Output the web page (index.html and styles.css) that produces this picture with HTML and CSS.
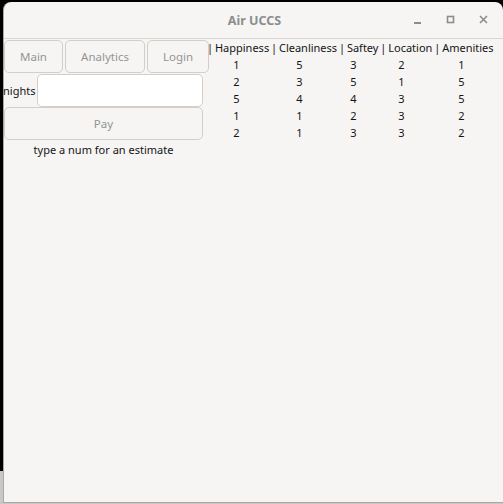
FILE: index.html
```html
<!DOCTYPE html>
<html>
<head>
<meta charset="utf-8">
<link rel="stylesheet" href="styles.css">
<title>Air UCCS</title>
</head>
<body>
<div class="window">
  <header class="titlebar">
    <span class="title">Air UCCS</span>
    <div class="controls">
      <svg class="ctl" width="12" height="12" viewBox="0 0 12 12"><rect x="2" y="8" width="7" height="2" fill="#8c8c8c"/></svg>
      <svg class="ctl" width="12" height="12" viewBox="0 0 12 12"><rect x="2.5" y="2.5" width="6" height="6" fill="none" stroke="#8c8c8c" stroke-width="1.6"/></svg>
      <svg class="ctl" width="12" height="12" viewBox="0 0 12 12"><path d="M2 2 L9 9 M9 2 L2 9" stroke="#8c8c8c" stroke-width="1.6"/></svg>
    </div>
  </header>
  <main class="content">
    <section class="left">
      <nav class="nav">
        <button class="btn b-main">Main</button>
        <button class="btn b-analytics">Analytics</button>
        <button class="btn b-login">Login</button>
      </nav>
      <div class="row">
        <label class="lbl">nights</label>
        <input class="input" type="text">
      </div>
      <button class="btn b-pay">Pay</button>
      <p class="hint">type a num for an estimate</p>
    </section>
    <section class="table">
      <div class="thead">| Happiness | Cleanliness | Saftey | Location | Amenities</div>
      <div class="tbody">
        <span>1</span><span>5</span><span>3</span><span>2</span><span>1</span>
        <span>2</span><span>3</span><span>5</span><span>1</span><span>5</span>
        <span>5</span><span>4</span><span>4</span><span>3</span><span>5</span>
        <span>1</span><span>1</span><span>2</span><span>3</span><span>2</span>
        <span>2</span><span>1</span><span>3</span><span>3</span><span>2</span>
      </div>
    </section>
  </main>
</div>
</body>
</html>
```

FILE: styles.css
```css
html, body {
  margin: 0;
  height: 504px;
  overflow: hidden;
}
body {
  background: linear-gradient(#000 471px, #c9c8c6 471px);
  padding: 2px 0 0 3px;
  box-sizing: border-box;
  font-family: "Noto Sans", "Open Sans", sans-serif;
}
.window {
  width: 500px;
  height: 501px;
  box-sizing: border-box;
  background: #f6f5f4;
  border: 1px solid #aaa7a4;
  border-top: none;
  border-right: none;
  border-radius: 8px 8px 0 0;
  display: flex;
  flex-direction: column;
}
.titlebar {
  height: 36px;
  border-bottom: 1px solid #d9d5d1;
  display: flex;
  align-items: center;
  justify-content: center;
  position: relative;
  border-radius: 8px 8px 0 0;
}
.title {
  font-weight: bold;
  font-size: 12.5px;
  color: #8b8d8e;
  margin-left: 2px;
  margin-top: 1px;
}
.controls {
  position: absolute;
  right: 13px;
  top: 12px;
  display: flex;
  gap: 21px;
}
.ctl { display: block; }
.content {
  display: flex;
  align-items: flex-start;
}
.left {
  width: 203px;
  flex: none;
  display: flex;
  flex-direction: column;
}
.nav {
  display: flex;
  gap: 2px;
  margin-top: 1px;
  width: 205px;
}
.btn {
  font-family: inherit;
  font-size: 11.5px;
  color: #929595;
  background: #f6f5f4;
  border: 1px solid #d3cec9;
  border-radius: 5px;
  height: 33px;
  padding: 0;
  box-sizing: border-box;
}
.b-main { width: 59px; }
.b-analytics { width: 80px; }
.b-login { width: 62px; }
.row {
  display: flex;
  align-items: center;
  height: 34px;
}
.lbl {
  width: 33px;
  font-size: 11px;
  color: #141414;
  white-space: nowrap;
  text-align: left;
  margin-left: -1px;
}
.input {
  width: 166px;
  height: 33px;
  box-sizing: border-box;
  border: 1px solid #d3cec9;
  border-radius: 5px;
  background: #fff;
  margin-left: 1px;
  margin-top: 1px;
}
.b-pay {
  width: 199px;
}
.hint {
  margin: 2px 0 0;
  width: 199px;
  text-align: center;
  font-size: 11px;
  color: #141414;
}
.table {
  font-size: 11px;
  color: #141414;
  line-height: 17px;
}
.thead {
  white-space: pre;
  word-spacing: -1px;
}
.tbody {
  display: grid;
  grid-template-columns: 59px 67px 41px 55px 65px;
  justify-items: center;
}
```
